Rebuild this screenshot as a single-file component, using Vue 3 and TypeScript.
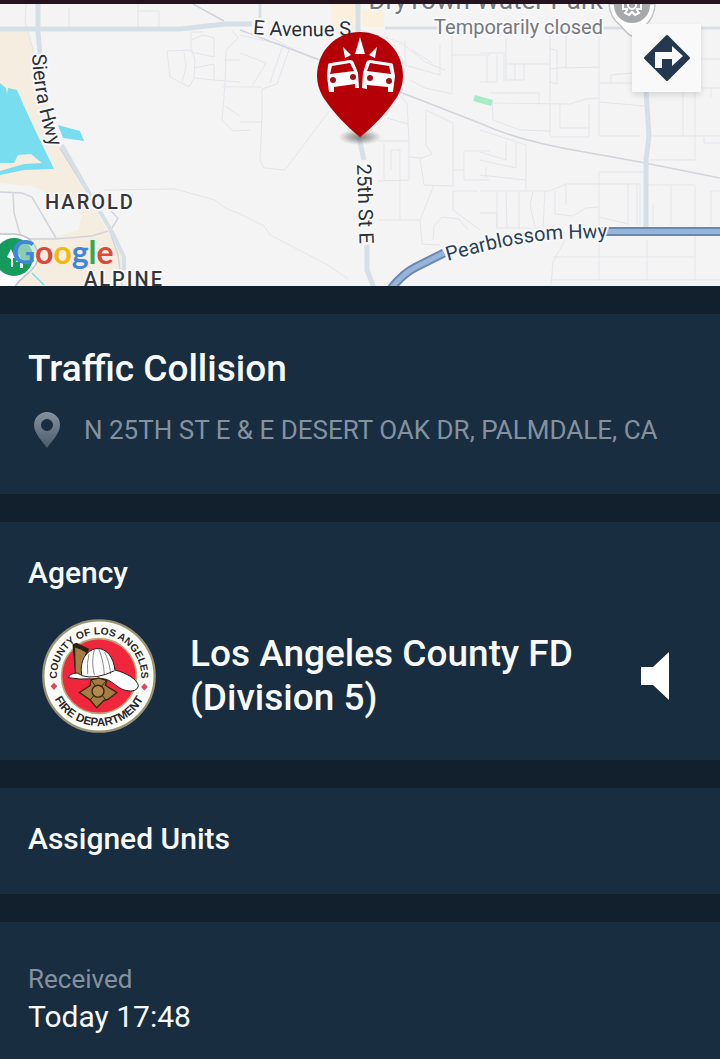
<script setup lang="ts">
interface Incident {
  type: string
  address: string
  agency: string
  received: string
}

const incident: Incident = {
  type: 'Traffic Collision',
  address: 'N 25TH ST E & E DESERT OAK DR, PALMDALE, CA',
  agency: 'Los Angeles County FD (Division 5)',
  received: 'Today 17:48',
}

const minorRoads: string[] = [
  'M26 4 L25 22 L35 56', 'M69 8 V28', 'M138 4 V28 M138 11 H159 V28',
  'M167 51 L192 50 L195 60 L194 78 L189 87 L170 77 Z M184 52 L186 67 L182 82',
  'M191 32 H203 M191 32 V52 L214 57 V38 L203 35 L191 40 M194 68 L214 64 V80 L194 78 M214 80 L240 82',
  'M232 30 L238 38 L226 50 L225 84 L222 120 L233 131 L250 130 M224 60 H240 M222 87 H262 M225 106 L240 116',
  'M240 35 L283 45 L289 50 L277 84 L262 89 V118 L260 160 L264 168 L285 170 L330 110',
  'M240 53 L266 63 L252 86 M240 122 H262 M262 33 L315 60 M283 45 L270 83',
  'M104 190 L175 189 L215 200 L225 208 L240 214 L264 226 L270 235 L328 265 L348 279',
  'M360 30 L400 42 L425 62 L445 70 M405 40 V65 L440 75 V45 M412 50 L432 63 M410 80 L425 88 L453 94',
  'M395 90 L407 103 L409 140 V180 L378 181 M387 118 L408 124 M378 141 H410 M384 143 V180 M391 150 H400 V180 M391 150 V170',
  'M426 110 V145 L432 154 L420 159 L424 185 L453 186 M426 110 L453 123 V186 M409 157 L422 158',
  'M378 220 H420 L426 205 L434 185 M400 180 V220 M420 220 L422 244 L440 245 M433 240 L434 226 L442 217 L459 219 L468 230',
  'M453 191 H478 M453 191 V210 L480 230 M464 151 H490 M464 151 V180 H490 M453 170 H464',
  'M452 28 V92 M452 55 H490 M480 53 H504 V82 M487 55 V82 M497 55 V82 H480',
  'M506 38 V80 H524 V64 M515 64 V80 M506 64 H550 M550 30 V136 M557 50 V84 L550 82 M557 50 L550 49',
  'M566 20 V68 L599 67 M599 35 V136 H640 M550 69 L566 67 M599 83 H632 M611 83 V75 L632 73',
  'M490 93 H539 V103 M492 100 L493 120 L520 130 L550 131 M493 103 L570 104 L586 99 L599 98 M560 104 V128 H589 V104 M589 128 V137 H550',
  'M599 102 L645 106 M645 136 H720 M683 92 V135 M695 92 V160 H650 M704 137 V143 H720 M695 59 H720 M700 88 H720 M711 88 V97',
  'M480 130 L526 145 V190 M506 142 V160 L480 152 M516 143 V168 L480 160 M480 175 L526 180 M486 167 V178',
  'M480 191 H550 L566 184 H640 V225 M497 191 V228 M506 191 L507 228 M519 191 V228 M533 191 L530 205 L535 226 M545 191 L543 228 M555 191 V214 L573 216 L586 208 L599 207 M566 184 V205',
  'M599 172 V281 M599 172 H645 M628 184 V225 M637 184 V225 M645 185 H695 V281 M671 185 V225 M653 225 V204 M711 191 V225 M711 191 H720 M599 217 L628 224',
  'M565 240 L553 262 L551 285 M553 257 H695 M551 280 H720 M647 240 V281',
  'M480 213 H497 V228 M497 228 L540 228',
]
</script>

<template>
  <main class="page">
    <section class="map" aria-label="Incident map">
      <svg class="map-art" viewBox="0 4 720 282" preserveAspectRatio="xMidYMin slice">
        <defs>
          <radialGradient id="pin-shadow">
            <stop offset="0" stop-color="#333" stop-opacity="0.6" />
            <stop offset="0.5" stop-color="#555" stop-opacity="0.38" />
            <stop offset="1" stop-color="#777" stop-opacity="0" />
          </radialGradient>
          <path id="sierra" d="M32 54 C34 85 36 105 52 155" />
          <path id="avenue" d="M253 34 Q300 38 360 35" />
          <path id="street" d="M357 164 L360 260" />
          <path id="blossom" d="M448 261 C480 252 520 241 562 239 L640 237" />
        </defs>
        <rect y="0" width="720" height="290" fill="#f4f4f5" />
        <path fill="#f5ede0" d="M0 31 H29 L34 54 L58 143 L92 205 L112 238 L125 262 L128 290 H0 Z" />
        <path fill="#f4f4f5" d="M0 183 L35 187 L82 215 L78 230 L55 237 L0 239 Z" />
        <path fill="#faf0dc" d="M331 4 H358 V30 H331 Z M362 10 H384 V27 H362 Z" />
        <path fill="#79ddf0" d="M0 83 L6 88 L7 94 L8 88 L17 90 L24 106 L36 132 L54 169 L24 170 L0 175 Z M58 125 L80 131 L84 141 L63 138 Z" />
        <path fill="#f5ede0" d="M0 163 H14 L18 155 L31 154 L42 163 L24 164 L0 171 Z" />
        <g fill="none" stroke="#e3e5ea" stroke-width="1">
          <path v-for="road in minorRoads" :key="road" :d="road" />
        </g>
        <g fill="none" stroke="#d1d4da" stroke-width="1.5">
          <path d="M0 192 L22 193 L32 197 L56 238 M13 192 L14 213 L20 234 M0 239 L56 239 L92 236 L108 231 M112 228 L118 218 L108 208" />
          <path d="M60 148 L108 226 L118 255 L122 286 M193 4 L224 21 M240 30 L320 60 M400 92 L482 124 C530 146 590 152 640 162 L720 178" />
        </g>
        <path fill="none" stroke="#79ddf0" stroke-width="1.5" d="M32 273 L44 285" />
        <g fill="none" stroke="#d6dfe6" stroke-width="5">
          <path d="M0 29 H180 L225 24 H252" />
          <path d="M38 4 V32 L40 54" />
          <path stroke-width="4" d="M62 145 L92 198 L112 232 L124 257 V270" />
          <path stroke-width="3" d="M260 4 V18 M385 28 H438 M600 28 H632 M701 28 H720" />
          <path d="M358 4 V34 M359 138 L364 160 M367 245 V270 L374 288" />
          <path d="M646 90 L649 136 L646 160 V229" />
        </g>
        <path fill="none" stroke="#a8ebc4" stroke-width="6" d="M474 98 L492 103" />
        <path fill="none" stroke="#6688b1" stroke-width="9" d="M390 290 Q402 274 416 267 L444 253 M600 231.500 H720" />
        <path fill="none" stroke="#97b5da" stroke-width="5" d="M390 290 Q402 274 416 267 L444 253 M600 231.500 H720" />
        <g class="label">
          <text class="road"><textPath href="#sierra">Sierra Hwy</textPath></text>
          <text class="road"><textPath href="#avenue">E Avenue S</textPath></text>
          <text class="road"><textPath href="#street">25th St E</textPath></text>
          <text class="road highway"><textPath href="#blossom">Pearblossom Hwy</textPath></text>
          <text class="poi poi-name" x="603" y="9" text-anchor="end">DryTown Water Park</text>
          <text class="poi" x="603" y="34" text-anchor="end">Temporarily closed</text>
          <text class="place" x="45" y="209">HAROLD</text>
        </g>

        <!-- attraction marker -->
        <path fill="#fff" stroke="#c3c5c8" stroke-width="1.500" d="M609 4 Q610 18 621 26 Q628 35 632 36 Q638 35 644 27 Q655 17 655 4 Z" />
        <circle cx="632" cy="5" r="18" fill="#a6a8ab" />
        <g fill="none" stroke="#fff" stroke-width="2">
          <circle cx="632" cy="5" r="4" />
          <path d="M623 4 V9 H628 M641 4 V9 H636 M628 9 L625 13 L629 15 L632 12 L635 15 L639 13 L636 9" />
        </g>

        <!-- park marker -->
        <path fill="#fff" stroke="#bfc2c4" stroke-width="1.500" d="M-5 234 H14 C34 235 42 254 36 264 C31 273 23 276 17 284 L14 288 H-5 Z" />
        <circle cx="14" cy="257" r="19" fill="#159b5b" />
        <path fill="#fff" d="M11 249 L15 258 H13 V267 H11 V259 L7 257 Z M19 254 L23 263 V268 H20 V262 H16 Z" />
        <g class="label"><text class="place" x="84" y="286">ALPINE</text></g>
        <circle cx="25" cy="252" r="11" fill="#b9e3d2" opacity="0.7" />
        <text class="google" x="12" y="264"><tspan fill="#4285db">G</tspan><tspan fill="#dc493c">o</tspan><tspan fill="#f2b90d">o</tspan><tspan fill="#4285db">g</tspan><tspan fill="#36a650">l</tspan><tspan fill="#dc493c">e</tspan></text>

        <!-- collision marker -->
        <ellipse cx="360" cy="137" rx="22" ry="8" fill="url(#pin-shadow)" />
        <path fill="#b40006" d="M360 137 C348 128 332 111 323 97 C319 90 317 83 317 76 C317 51 336 32 360 32 C384 32 403 51 403 76 C403 83 401 90 397 97 C388 111 372 128 360 137 Z" />
        <g fill="#fff">
          <path d="M360 37 L365 54 H355 Z M343 47 L351 55 L345 58 Z M377 47 L369 55 L375 58 Z" />
          <path fill-rule="evenodd" d="M328 65 Q328 63 331 63 L350 60 Q353 60 354 63 L358 73 L359 88 H355 V84 L334 87 V92 H329 L327 76 Z M332 66 L330 74 L354 71 L350 63 Z" />
          <path fill-rule="evenodd" d="M393 65 Q393 63 390 63 L370 60 Q367 60 366 63 L363 73 L362 88 L367 89 V85 L388 87 V92 H393 L395 76 Z M389 66 L391 74 L367 71 L370 63 Z" />
        </g>
        <g fill="#9f1015">
          <circle cx="333" cy="80" r="3" /><circle cx="353" cy="77" r="3" />
          <circle cx="370" cy="78" r="3" /><circle cx="389" cy="81" r="3" />
        </g>
      </svg>
      <button class="directions" type="button" aria-label="Directions">
        <svg viewBox="0 0 48 48" width="48" height="48">
          <path fill="#24394f" stroke="#24394f" stroke-width="3" stroke-linejoin="round" d="M24 2.500 L45.500 24 L24 45.500 L2.500 24 Z" />
          <path fill="#f9f9fa" d="M12 34 V18 H29 V12 L40 22 L29 32 V25 H19 V34 Z" />
        </svg>
      </button>
    </section>

    <section class="card summary">
      <h1>{{ incident.type }}</h1>
      <div class="address">
        <svg viewBox="0 0 26 36" width="26" height="36" aria-hidden="true">
          <defs>
            <linearGradient id="place-fill" x1="0" y1="0" x2="0" y2="1">
              <stop offset="0" stop-color="#8592a0" />
              <stop offset="1" stop-color="#4b5b6c" />
            </linearGradient>
          </defs>
          <path fill="url(#place-fill)" fill-rule="evenodd" d="M13 0 A13 13 0 0 1 26 13 C26 21 18 29 13 36 C8 29 0 21 0 13 A13 13 0 0 1 13 0 Z M13 7 A6 6 0 0 0 13 19 A6 6 0 0 0 13 7 Z" />
        </svg>
        <span>{{ incident.address }}</span>
      </div>
    </section>

    <section class="card">
      <h2>Agency</h2>
      <div class="agency">
        <svg class="badge" viewBox="36 40 344 344" role="img" aria-label="County of Los Angeles Fire Department">
          <defs>
            <path id="badge-top" d="M83 236 A127 127 0 1 1 333 236" />
            <path id="badge-bottom" d="M57 212 A151 151 0 0 0 359 212" />
          </defs>
          <circle cx="208" cy="212" r="168" fill="#fdfdf8" stroke="#9b9474" stroke-width="7" />
          <circle cx="208" cy="212" r="113" fill="#f0263c" stroke="#b8a877" stroke-width="5" />
          <text class="badge-text badge-text-top"><textPath href="#badge-top" startOffset="50%" text-anchor="middle">COUNTY OF LOS ANGELES</textPath></text>
          <text class="badge-text badge-text-bottom"><textPath href="#badge-bottom" startOffset="50%" text-anchor="middle">FIRE DEPARTMENT</textPath></text>
          <path fill="#dc4660" d="M72 232 l10 11 l-10 11 l-10 -11 Z M345 234 l10 11 l-10 11 l-10 -11 Z" />
          <path fill="#2d2314" d="M128 116 L140 112 L178 130 L150 214 L136 212 Z" />
          <path fill="#a27e45" d="M136 126 L152 132 L168 140 L158 212 L138 206 Z" />
          <path fill="#fff" stroke="#2d1c1c" stroke-width="3" d="M116 217 Q118 204 142 203 L156 210 C148 166 170 134 200 129 C234 128 252 158 256 194 C290 202 324 222 327 242 Q322 262 290 256 C262 250 246 222 220 220 L150 221 Z" />
          <path fill="none" stroke="#8d8989" stroke-width="3" d="M178 145 Q170 172 174 207 M194 133 Q184 166 194 209 M207 130 Q222 164 224 209 M224 138 Q240 168 243 206" />
          <path fill="none" stroke="#2d1c1c" stroke-width="3" d="M156 211 Q198 224 255 196" />
          <path fill="#a27e45" stroke="#3c230e" stroke-width="4" d="M184 224 L207 218 L232 226 L227 240 L262 262 L236 282 L222 286 L201 308 L181 284 L149 262 L181 241 Z" />
          <path stroke="#3c230e" stroke-width="3" d="M184 224 L230 287 M230 226 L181 285" />
          <circle cx="205" cy="258" r="18" fill="#b28a4c" stroke="#3c230e" stroke-width="4" />
        </svg>
        <p class="agency-name">{{ incident.agency }}</p>
        <button class="speaker" type="button" aria-label="Listen">
          <svg viewBox="0 0 29 48" width="29" height="48">
            <path fill="#fff" d="M1 15 H13 L29 0 V48 L13 33 H1 Z" />
          </svg>
        </button>
      </div>
    </section>

    <section class="card units">
      <h2>Assigned Units</h2>
    </section>

    <section class="card received">
      <dl>
        <dt>Received</dt>
        <dd>{{ incident.received }}</dd>
      </dl>
    </section>
  </main>
</template>

<style>
body {
  background: #12202d;
}
</style>

<style scoped>
.page {
  display: flex;
  flex-direction: column;
  gap: 28px;
  min-height: 100vh;
  box-sizing: border-box;
  border-top: 4px solid #24121f;
  background: #12202d;
  color: #f7f9fb;
  font-family: Roboto, "Liberation Sans", sans-serif;
}

.map {
  position: relative;
}

.map-art {
  display: block;
  width: 100%;
}

.label text {
  stroke: #f7f8f9;
  stroke-width: 4px;
  stroke-linejoin: round;
  paint-order: stroke;
}

.label .road {
  font-size: 20px;
  fill: #2e3034;
}

.label .highway {
  fill: #2b4058;
}

.label .poi {
  font-size: 20px;
  fill: #77797d;
}

.label .poi-name {
  font-size: 26px;
}

.label .place {
  font-size: 20px;
  font-weight: 500;
  letter-spacing: 2px;
  fill: #35363a;
}

.google {
  font-family: Lato, sans-serif;
  font-size: 32px;
  font-weight: 700;
}

.directions {
  position: absolute;
  top: 20px;
  right: 19px;
  display: grid;
  place-items: center;
  width: 69px;
  height: 68px;
  padding: 0;
  border: 0;
  background: #f9f9fa;
  box-shadow: 0 3px 6px rgb(0 0 0 / 12%);
}

.card {
  padding: 33px 28px 27px;
  background: #192d40;
}

h1,
h2,
p,
dl,
dd {
  margin: 0;
}

h1 {
  font-size: 37px;
  font-weight: 500;
  line-height: 44px;
}

h2 {
  font-size: 30px;
  font-weight: 500;
  line-height: 36px;
}

.summary {
  padding-bottom: 46px;
}

.address {
  display: flex;
  align-items: center;
  gap: 24px;
  margin-top: 21px;
  padding-left: 6px;
  color: #8492a0;
  font-size: 26px;
  line-height: 36px;
}

.address svg {
  flex: none;
}

.agency {
  display: flex;
  align-items: center;
  gap: 34px;
  margin-top: 28px;
  padding: 0 23px 0 14px;
}

.badge {
  flex: none;
  width: 114px;
  height: 114px;
}

.badge-text {
  font-family: "Liberation Sans", sans-serif;
  font-weight: 700;
  fill: #29282d;
}

.badge-text-top {
  font-size: 31px;
}

.badge-text-bottom {
  font-size: 35px;
}

.agency-name {
  flex: 1;
  font-size: 37px;
  font-weight: 500;
  line-height: 44px;
}

.speaker {
  flex: none;
  padding: 0;
  border: 0;
  background: none;
}

.speaker svg {
  display: block;
}

.units {
  padding-bottom: 37px;
}

.received {
  flex: 1;
  padding-top: 40px;
  padding-bottom: 20px;
}

dt {
  color: #8492a0;
  font-size: 26px;
  line-height: 34px;
}

dd {
  margin-top: 3px;
  font-size: 30px;
  line-height: 36px;
}
</style>
